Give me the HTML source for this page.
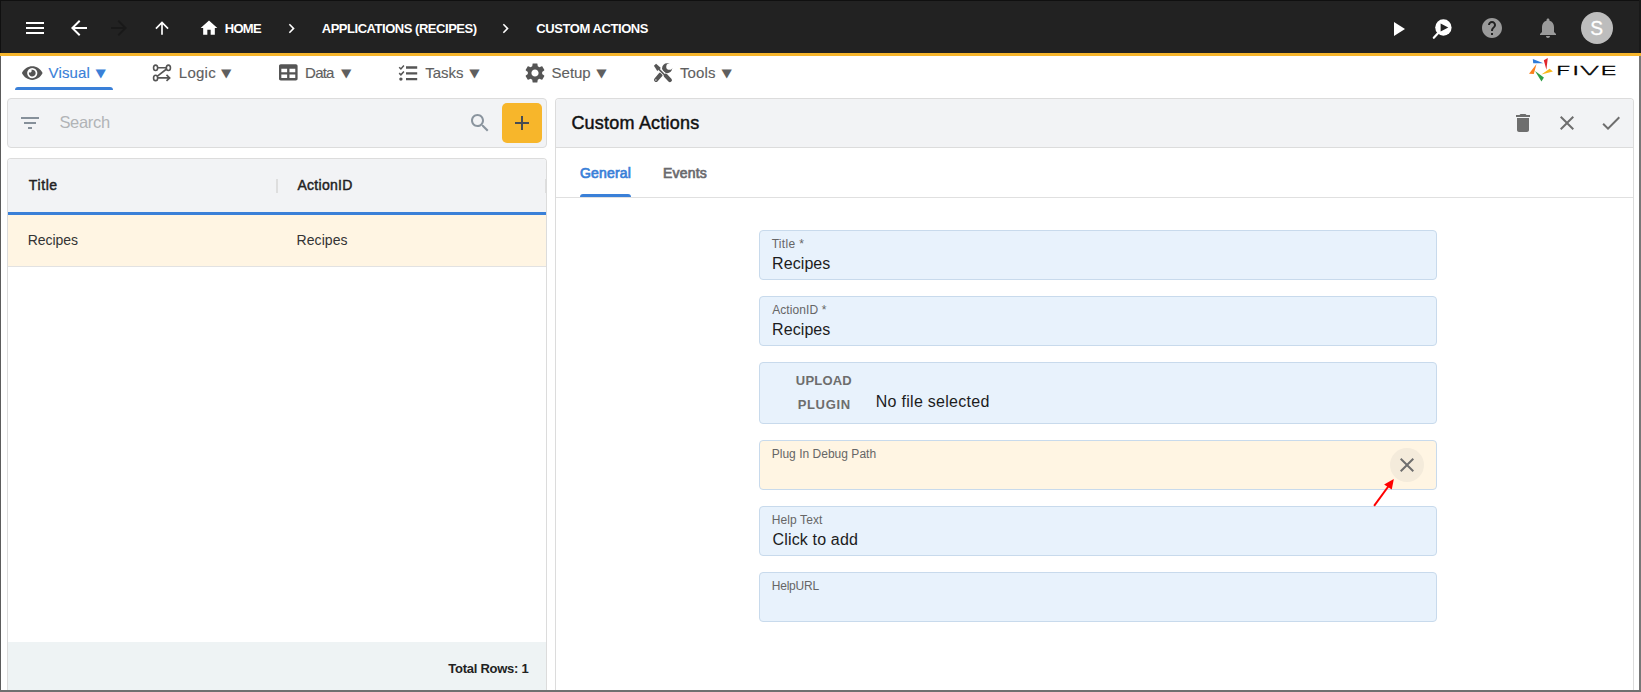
<!DOCTYPE html>
<html lang="en">
<head>
<meta charset="utf-8">
<title>Custom Actions</title>
<style>
html,body{margin:0;padding:0;}
body{width:1641px;height:692px;overflow:hidden;background:#fff;position:relative;font-family:"Liberation Sans",sans-serif;}
header,nav,aside,main{display:block;margin:0;padding:0;}
.abs{position:absolute;}
.t{position:absolute;white-space:nowrap;line-height:1;font-family:"Liberation Sans",sans-serif;}
svg{position:absolute;overflow:visible;}
#hdr{left:0;top:0;width:1641px;height:53px;background:#222;}
#orange{left:0;top:53px;width:1641px;height:3px;background:#f6b52b;}
.panel{box-sizing:border-box;border:1px solid #dcdcdc;border-radius:4px;background:#fff;}
.fld{box-sizing:border-box;border:1px solid #c8daec;border-radius:4px;background:#e8f2fc;left:759px;width:678px;height:50px;}
.tri{position:absolute;font-family:"DejaVu Sans",sans-serif;line-height:1;white-space:nowrap;}
</style>
</head>
<body>
<header>
<!-- top bar -->
<div id="hdr" class="abs"></div>
<div id="orange" class="abs"></div>

<!-- header icons -->
<svg style="left:23px;top:16px" width="24" height="24" viewBox="0 0 24 24"><path fill="#fff" d="M3 18h18v-2H3v2zm0-5h18v-2H3v2zm0-7v2h18V6H3z"/></svg>
<svg style="left:67px;top:16px" width="24" height="24" viewBox="0 0 24 24"><path fill="#fff" d="M20 11H7.83l5.59-5.59L12 4l-8 8 8 8 1.41-1.41L7.83 13H20v-2z"/></svg>
<svg style="left:107px;top:16px" width="24" height="24" viewBox="0 0 24 24"><path fill="#191919" d="M12 4l-1.41 1.41L16.17 11H4v2h12.17l-5.58 5.59L12 20l8-8z"/></svg>
<svg style="left:152px;top:18px" width="20" height="20" viewBox="0 0 24 24"><path fill="#fff" d="M4 12l1.41 1.41L11 7.83V20h2V7.83l5.58 5.59L20 12l-8-8-8 8z"/></svg>
<svg style="left:199px;top:18px" width="20" height="20" viewBox="0 0 24 24"><path fill="#fff" d="M10 20v-6h4v6h5v-8h3L12 3 2 12h3v8z"/></svg>
<svg style="left:282.300px;top:18.600px" width="19" height="19" viewBox="0 0 24 24"><path fill="#fff" d="M10 6L8.59 7.41 13.17 12l-4.58 4.59L10 18l6-6z"/></svg>
<svg style="left:496.300px;top:18.600px" width="19" height="19" viewBox="0 0 24 24"><path fill="#fff" d="M10 6L8.59 7.41 13.17 12l-4.58 4.59L10 18l6-6z"/></svg>

<svg style="left:1385.7px;top:17px" width="24" height="24" viewBox="0 0 24 24"><path fill="#fff" d="M8 5v14l11-7z"/></svg>
<svg style="left:1428px;top:14px" width="30" height="30" viewBox="1428 14 30 30">
  <line x1="1438.2" y1="33" x2="1433.800" y2="37.800" stroke="#fff" stroke-width="2.2" stroke-linecap="round"/>
  <circle cx="1443.4" cy="27.5" r="8.2" fill="#fff"/>
  <path d="M1440.6 23.4v8.1l7.7-4.05z" fill="#222"/>
</svg>
<svg style="left:1480px;top:16px" width="24" height="24" viewBox="0 0 24 24"><path fill="#9a9a9a" d="M12 2C6.48 2 2 6.48 2 12s4.48 10 10 10 10-4.48 10-10S17.52 2 12 2zm1 17h-2v-2h2v2zm2.070-7.75l-.9.92C13.45 12.9 13 13.5 13 15h-2v-.5c0-1.1.45-2.1 1.17-2.83l1.240-1.260c.37-.36.59-.86.59-1.410 0-1.1-.9-2-2-2s-2 .9-2 2H8c0-2.210 1.790-4 4-4s4 1.790 4 4c0 .88-.36 1.680-.930 2.250z"/></svg>
<svg style="left:1535.7px;top:16px" width="24" height="24" viewBox="0 0 24 24"><path fill="#9a9a9a" d="M12 22c1.1 0 2-.9 2-2h-4c0 1.1.89 2 2 2zm6-6v-5c0-3.070-1.640-5.640-4.500-6.320V4c0-.83-.67-1.500-1.500-1.500s-1.500.67-1.500 1.500v.68C7.630 5.360 6 7.920 6 11v5l-2 2v1h16v-1l-2-2z"/></svg>
<div class="abs" style="left:1581px;top:12px;width:32px;height:32px;border-radius:16px;background:#bdbdbd;"></div>
<span class="t" style="left:1590.300px;top:18px;font-size:20px;color:#fff;-webkit-text-stroke:0.3px #fff;transform:scaleX(0.960);transform-origin:50% 50%;">S</span>

<span class="t" style="left:224.72px;top:22.00px;font-size:13px;font-weight:700;color:#fff;letter-spacing:-0.680px;">HOME</span>
<span class="t" style="left:321.72px;top:22.00px;font-size:13px;font-weight:700;color:#fff;letter-spacing:-0.467px;">APPLICATIONS (RECIPES)</span>
<span class="t" style="left:536.32px;top:22.00px;font-size:13px;font-weight:700;color:#fff;letter-spacing:-0.429px;">CUSTOM ACTIONS</span>
</header>
<nav>
<!-- menu row icons -->
<svg style="left:21.7px;top:64px" width="20.5" height="18.2" viewBox="0 0 576 512"><path fill="#555" d="M572.52 241.4C518.29 135.59 410.93 64 288 64S57.68 135.64 3.48 241.41a32.35 32.35 0 0 0 0 29.19C57.71 376.41 165.07 448 288 448s230.32-71.64 284.52-177.41a32.35 32.35 0 0 0 0-29.19zM288 400a144 144 0 1 1 144-144 143.930 143.930 0 0 1-144 144zm0-240a95.310 95.310 0 0 0-25.310 3.790 47.850 47.850 0 0 1-66.900 66.900A95.780 95.780 0 1 0 288 160z"/></svg>
<div class="abs" style="left:15px;top:87px;width:98px;height:3px;background:#3a80d8;border-radius:3px 3px 0 0;"></div>

<!-- logic icon -->
<svg style="left:150px;top:62px" width="24" height="22" viewBox="150 62 24 22" fill="none" stroke="#555" stroke-width="1.600">
  <ellipse cx="155.600" cy="67.800" rx="2.050" ry="2.700"/>
  <ellipse cx="168.400" cy="67.800" rx="2.050" ry="2.700"/>
  <ellipse cx="155.600" cy="77.900" rx="2.050" ry="2.700"/>
  <path d="M157.500 67.800h9M166.600 69l-9.500 7.400M157.500 77.900h11.800M166.500 74.900l3.200 3-3.200 3"/>
</svg>
<!-- data icon -->
<svg style="left:278.800px;top:63.450px" width="18.600" height="18.600" viewBox="0 0 512 512"><path fill="#555" d="M464 32H48C21.490 32 0 53.490 0 80v352c0 26.510 21.490 48 48 48h416c26.510 0 48-21.490 48-48V80c0-26.510-21.490-48-48-48zM224 416H64v-96h160v96zm0-160H64v-96h160v96zm224 160H288v-96h160v96zm0-160H288v-96h160v96z"/></svg>
<!-- tasks icon -->
<svg style="left:396px;top:62px" width="24" height="22" viewBox="396 62 24 22" fill="none" stroke="#555">
  <path stroke-width="2.300" d="M406 67.500h11.200M406 73.300h11.200M406 79.100h11.200"/>
  <path stroke-width="1.500" d="M399.200 67.300l1.700 1.700 3-3.400M399.200 73.100l1.700 1.700 3-3.400"/>
  <circle cx="400.900" cy="79.100" r="1.700" fill="#555" stroke="none"/>
</svg>
<!-- setup icon -->
<svg style="left:523px;top:61px" width="24" height="24" viewBox="0 0 24 24"><path fill="#555" d="M19.140 12.940c.04-.3.06-.61.06-.94 0-.32-.02-.64-.070-.94l2.030-1.580c.18-.14.23-.41.12-.61l-1.920-3.320c-.12-.22-.37-.29-.59-.22l-2.390.96c-.5-.38-1.030-.7-1.620-.94l-.36-2.540c-.04-.24-.24-.41-.48-.41h-3.840c-.24 0-.43.17-.47.41l-.36 2.540c-.59.24-1.130.57-1.620.94l-2.390-.96c-.22-.08-.47 0-.59.22L2.740 8.870c-.12.21-.08.47.12.61l2.030 1.580c-.05.3-.09.63-.09.940s.02.640.07.940l-2.030 1.580c-.18.140-.23.410-.12.610l1.920 3.320c.12.220.37.290.59.220l2.390-.96c.5.380 1.030.7 1.620.940l.36 2.540c.05.240.24.410.48.410h3.840c.24 0 .44-.17.470-.410l.36-2.540c.59-.24 1.130-.56 1.620-.940l2.390.96c.22.080.47 0 .59-.220l1.920-3.320c.12-.22.070-.47-.12-.610l-2.010-1.580zM12 15.600c-1.980 0-3.600-1.620-3.600-3.600s1.620-3.600 3.600-3.600 3.600 1.620 3.600 3.600-1.620 3.600-3.600 3.600z"/></svg>
<!-- tools icon -->
<svg style="left:651px;top:61px" width="24" height="24" viewBox="651 61 24 24">
  <circle cx="667.100" cy="68.200" r="5" fill="#555"/>
  <circle cx="669.400" cy="66.700" r="3.150" fill="#fff"/>
  <path d="M660.700 74.500L656.100 79.800" stroke="#555" stroke-width="4.200" stroke-linecap="round" fill="none"/>
  <path d="M657 67l9 9" stroke="#fff" stroke-width="3.300" fill="none"/>
  <polygon fill="#555" points="656.100,63.700 653.900,65.700 657.300,71 660.900,67.900"/>
  <path d="M658.800 69.100l6.400 6.400" stroke="#555" stroke-width="1.600" fill="none"/>
  <path d="M665.700 75.700L669.900 80.100" stroke="#555" stroke-width="4.100" stroke-linecap="round" fill="none"/>
  <circle cx="655.900" cy="80" r="0.800" fill="#ddd"/>
</svg>

<!-- dropdown triangles -->
<span class="tri" style="left:95.46px;top:67.6px;font-size:13.5px;color:#3a80d8;transform:scaleY(0.86);transform-origin:0 0;">▼</span>
<span class="tri" style="left:221.06px;top:67.6px;font-size:13.5px;color:#5f5f5f;transform:scaleY(0.86);transform-origin:0 0;">▼</span>
<span class="tri" style="left:340.96px;top:67.6px;font-size:13.5px;color:#5f5f5f;transform:scaleY(0.86);transform-origin:0 0;">▼</span>
<span class="tri" style="left:469.16px;top:67.6px;font-size:13.5px;color:#5f5f5f;transform:scaleY(0.86);transform-origin:0 0;">▼</span>
<span class="tri" style="left:596.36px;top:67.6px;font-size:13.5px;color:#5f5f5f;transform:scaleY(0.86);transform-origin:0 0;">▼</span>
<span class="tri" style="left:721.56px;top:67.6px;font-size:13.5px;color:#5f5f5f;transform:scaleY(0.86);transform-origin:0 0;">▼</span>

<span class="t" style="left:48.50px;top:65.10px;font-size:15px;font-weight:400;color:#3a80d8;letter-spacing:0.161px;-webkit-text-stroke:0.15px #3a80d8;">Visual</span>
<span class="t" style="left:178.80px;top:65.10px;font-size:15px;font-weight:400;color:#5f5f5f;letter-spacing:0.260px;-webkit-text-stroke:0.15px #5f5f5f;">Logic</span>
<span class="t" style="left:305.10px;top:65.10px;font-size:15px;font-weight:400;color:#5f5f5f;letter-spacing:-0.796px;-webkit-text-stroke:0.15px #5f5f5f;">Data</span>
<span class="t" style="left:425.20px;top:65.10px;font-size:15px;font-weight:400;color:#5f5f5f;letter-spacing:-0.011px;-webkit-text-stroke:0.15px #5f5f5f;">Tasks</span>
<span class="t" style="left:551.60px;top:65.10px;font-size:15px;font-weight:400;color:#5f5f5f;letter-spacing:-0.026px;-webkit-text-stroke:0.15px #5f5f5f;">Setup</span>
<span class="t" style="left:680.00px;top:65.10px;font-size:15px;font-weight:400;color:#5f5f5f;letter-spacing:0.092px;-webkit-text-stroke:0.15px #5f5f5f;">Tools</span>
<!-- FIVE logo -->
<svg style="left:1526px;top:56px" width="96" height="30" viewBox="1526 56 96 30">
  <polygon fill="#2f7bd9" points="1532.800,58.900 1543.400,63.200 1533.200,63.200"/>
  <polygon fill="#e0262c" points="1543.800,60.200 1547.800,58 1546.400,69.800"/>
  <polygon fill="#f9b719" points="1541.400,74.500 1549.600,68.800 1552.900,71.600"/>
  <polygon fill="#2e9f46" points="1535,71 1543.900,77.400 1541.500,81.600"/>
  <polygon fill="#fa7f1c" points="1536.500,64 1529,73.700 1533.800,73.900"/>
  <g transform="translate(1554.900,74.600) scale(2.260,1)"><text x="0" y="0" font-family="'DejaVu Sans',sans-serif" font-weight="200" font-size="12.700" fill="#000" stroke="#000" stroke-width="0.340">FIVE</text></g>
</svg>

</nav>
<aside>
<!-- left: search bar -->
<div class="abs panel" style="left:7px;top:98px;width:540px;height:50px;background:#f2f3f5;"></div>
<svg style="left:18px;top:111px" width="24" height="24" viewBox="0 0 24 24"><path fill="#86909a" d="M10 18h4v-2h-4v2zM3 6v2h18V6H3zm3 7h12v-2H6v2z"/></svg>
<svg style="left:468px;top:111px" width="24" height="24" viewBox="0 0 24 24"><path fill="#8a949e" d="M15.500 14h-.79l-.28-.27C15.410 12.590 16 11.110 16 9.500 16 5.910 13.090 3 9.500 3S3 5.910 3 9.500 5.910 16 9.500 16c1.610 0 3.090-.59 4.230-1.570l.27.28v.79l5 4.990L20.490 19l-4.990-5zm-6 0C7.010 14 5 11.990 5 9.500S7.010 5 9.500 5 14 7.010 14 9.500 11.990 14 9.500 14z"/></svg>
<div class="abs" style="left:502px;top:103px;width:40px;height:40px;border-radius:5px;background:#f7b62b;"></div>
<svg style="left:510px;top:111px" width="24" height="24" viewBox="0 0 24 24"><path fill="#474c52" d="M19 13h-6v6h-2v-6H5v-2h6V5h2v6h6v2z"/></svg>

<!-- left: table -->
<div class="abs panel" style="left:7px;top:158px;width:540px;height:540px;border-bottom:none;border-radius:4px 4px 0 0;"></div>
<div class="abs" style="left:8px;top:159px;width:538px;height:53px;background:#f2f3f5;border-radius:3px 3px 0 0;"></div>
<div class="abs" style="left:8px;top:212px;width:538px;height:3px;background:#3a80d8;"></div>
<div class="abs" style="left:276px;top:179px;width:2px;height:14px;background:#dedede;"></div>
<div class="abs" style="left:545px;top:179px;width:1px;height:14px;background:#dedede;"></div>
<div class="abs" style="left:8px;top:215px;width:538px;height:51px;background:#fff5e3;"></div>
<div class="abs" style="left:8px;top:266px;width:538px;height:1px;background:#e2e2e2;"></div>
<div class="abs" style="left:8px;top:642px;width:538px;height:50px;background:#eef3f4;"></div>

<span class="t" style="left:59.41px;top:114.23px;font-size:16.5px;font-weight:400;color:#b1b4b7;letter-spacing:-0.300px;">Search</span>
<span class="t" style="left:28.86px;top:177.85px;font-size:14px;font-weight:400;color:#222;letter-spacing:0.586px;-webkit-text-stroke:0.45px #222;">Title</span>
<span class="t" style="left:297.46px;top:177.85px;font-size:14px;font-weight:400;color:#222;letter-spacing:0.280px;-webkit-text-stroke:0.45px #222;">ActionID</span>
<span class="t" style="left:27.76px;top:232.85px;font-size:14px;font-weight:400;color:#333;letter-spacing:-0.036px;">Recipes</span>
<span class="t" style="left:296.56px;top:232.85px;font-size:14px;font-weight:400;color:#333;letter-spacing:0.064px;">Recipes</span>
<span class="t" style="left:448.32px;top:661.90px;font-size:13px;font-weight:700;color:#222;letter-spacing:-0.266px;">Total Rows: 1</span>
</aside>
<main>
<!-- right panel -->
<div class="abs panel" style="left:555px;top:98px;width:1079px;height:600px;border-bottom:none;border-radius:4px 4px 0 0;"></div>
<div class="abs" style="left:556px;top:99px;width:1077px;height:48px;background:#f2f3f5;border-radius:3px 3px 0 0;"></div>
<div class="abs" style="left:556px;top:147px;width:1077px;height:1px;background:#dcdcdc;"></div>
<div class="abs" style="left:556px;top:197px;width:1077px;height:1px;background:#e0e0e0;"></div>
<div class="abs" style="left:580px;top:194px;width:51px;height:3px;background:#3a80d8;border-radius:3px 3px 0 0;"></div>
<svg style="left:1511px;top:111px" width="24" height="24" viewBox="0 0 24 24"><path fill="#6e6e6e" d="M6 19c0 1.100.9 2 2 2h8c1.100 0 2-.9 2-2V7H6v12zM19 4h-3.500l-1-1h-5l-1 1H5v2h14V4z"/></svg>
<svg style="left:1555px;top:111px" width="24" height="24" viewBox="0 0 24 24"><path fill="#6e6e6e" d="M19 6.410L17.590 5 12 10.590 6.410 5 5 6.410 10.590 12 5 17.590 6.410 19 12 13.410 17.590 19 19 17.590 13.410 12z"/></svg>
<svg style="left:1599px;top:111px" width="24" height="24" viewBox="0 0 24 24"><path fill="#6e6e6e" d="M9 16.170L4.830 12l-1.420 1.410L9 19 21 7l-1.410-1.410z"/></svg>

<!-- fields -->
<div class="abs fld" style="top:230px;"></div>
<div class="abs fld" style="top:296px;"></div>
<div class="abs fld" style="top:362px;height:62px;"></div>
<div class="abs fld" style="top:440px;background:#fff5e3;"></div>
<div class="abs fld" style="top:506px;"></div>
<div class="abs fld" style="top:572px;"></div>
<div class="abs" style="left:1390px;top:448px;width:34px;height:34px;border-radius:17px;background:#f4ebdb;"></div>
<svg style="left:1395px;top:453px" width="24" height="24" viewBox="0 0 24 24"><path fill="#6e6e6e" d="M19 6.410L17.590 5 12 10.590 6.410 5 5 6.410 10.590 12 5 17.590 6.410 19 12 13.410 17.590 19 19 17.590 13.410 12z"/></svg>
<!-- red arrow -->
<svg style="left:1370px;top:475px" width="30" height="34" viewBox="1370 475 30 34">
  <line x1="1374.100" y1="505.800" x2="1389" y2="485.500" stroke="#ff0000" stroke-width="2"/>
  <polygon fill="#ff0000" points="1393.800,479 1384.100,484.500 1391.800,489.400"/>
</svg>

<span class="t" style="left:571.42px;top:113.56px;font-size:18px;font-weight:400;color:#111;letter-spacing:0.207px;-webkit-text-stroke:0.45px #111;">Custom Actions</span>
<span class="t" style="left:579.96px;top:166.05px;font-size:14px;font-weight:400;color:#3a80d8;letter-spacing:0.178px;-webkit-text-stroke:0.7px #3a80d8;">General</span>
<span class="t" style="left:662.96px;top:166.05px;font-size:14px;font-weight:400;color:#6a6a6e;letter-spacing:0.213px;-webkit-text-stroke:0.7px #6a6a6e;">Events</span>
<span class="t" style="left:771.68px;top:237.64px;font-size:12px;font-weight:400;color:#666;letter-spacing:0.318px;">Title *</span>
<span class="t" style="left:772.04px;top:256.16px;font-size:16px;font-weight:400;color:#1c1c1c;letter-spacing:0.085px;">Recipes</span>
<span class="t" style="left:772.18px;top:303.64px;font-size:12px;font-weight:400;color:#666;letter-spacing:0.098px;">ActionID *</span>
<span class="t" style="left:772.04px;top:322.16px;font-size:16px;font-weight:400;color:#1c1c1c;letter-spacing:0.085px;">Recipes</span>
<span class="t" style="left:795.82px;top:373.80px;font-size:13px;font-weight:700;color:#6d6d6d;letter-spacing:0.194px;">UPLOAD</span>
<span class="t" style="left:797.72px;top:397.70px;font-size:13px;font-weight:700;color:#6d6d6d;letter-spacing:0.647px;">PLUGIN</span>
<span class="t" style="left:875.74px;top:394.26px;font-size:16px;font-weight:400;color:#1c1c1c;letter-spacing:0.282px;">No file selected</span>
<span class="t" style="left:771.68px;top:447.64px;font-size:12px;font-weight:400;color:#666;letter-spacing:0.021px;">Plug In Debug Path</span>
<span class="t" style="left:771.68px;top:513.64px;font-size:12px;font-weight:400;color:#666;letter-spacing:0.116px;">Help Text</span>
<span class="t" style="left:772.54px;top:532.16px;font-size:16px;font-weight:400;color:#1c1c1c;letter-spacing:0.157px;">Click to add</span>
<span class="t" style="left:771.68px;top:579.64px;font-size:12px;font-weight:400;color:#666;letter-spacing:-0.191px;">HelpURL</span>
</main>

<!-- window frame -->
<div class="abs" style="left:0;top:0;width:1641px;height:1px;background:#101010;"></div>
<div class="abs" style="left:0;top:0;width:1px;height:53px;background:#101010;"></div>
<div class="abs" style="left:0;top:56px;width:1px;height:636px;background:#5c5c5c;"></div>
<div class="abs" style="left:1639px;top:0;width:2px;height:53px;background:#191919;"></div>
<div class="abs" style="left:1639px;top:56px;width:2px;height:636px;background:#777;"></div>
<div class="abs" style="left:0;top:690px;width:1641px;height:2px;background:#707070;"></div>
</body>
</html>
